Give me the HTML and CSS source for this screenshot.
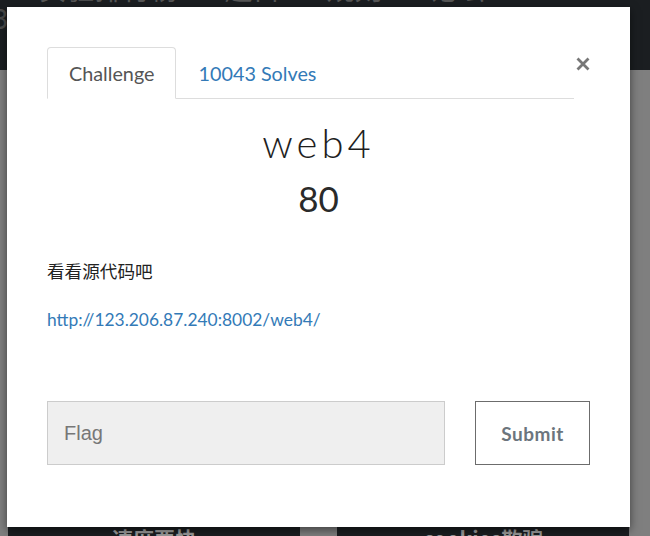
FILE: index.html
```html
<!DOCTYPE html>
<html lang="zh">
<head>
<meta charset="utf-8">
<title>web4</title>
<link rel="stylesheet" href="styles.css">
</head>
<body>
<header class="topnav">
  <span class="brand">3</span>
  <nav class="topnav-links">
    <span>实验排行榜</span><span>题目</span><span>规则</span><span>论坛</span>
  </nav>
</header>
<main class="grid">
  <div class="card"></div>
  <div class="card"></div>
  <div class="card"></div>
  <div class="card"></div>
  <div class="card"></div>
  <div class="card"></div>
  <div class="card"><span class="card-title">速度要快</span></div>
  <div class="card"><span class="card-title">cookies欺骗</span></div>
</main>

<div class="modal">
  <div class="modal-header">
    <ul class="tabs">
      <li class="tab active">Challenge</li>
      <li class="tab link">10043 Solves</li>
    </ul>
    <button class="close" aria-label="Close">
      <svg width="14" height="14" viewBox="0 0 14 14"><path d="M1.5 1.5 L12.5 12.5 M12.5 1.5 L1.5 12.5" stroke="#777" stroke-width="2.8" stroke-linecap="butt"/></svg>
    </button>
  </div>
  <h2 class="chal-name">web4</h2>
  <h3 class="chal-value">80</h3>
  <p class="desc">看看源代码吧</p>
  <p class="desc link-line"><a href="#">http://123.206.87.240:8002/web4/</a></p>
  <form class="flag-row">
    <input class="flag-input" type="text" placeholder="Flag">
    <button class="submit" type="button">Submit</button>
  </form>
</div>
</body>
</html>
```
FILE: styles.css
```css
html, body {
  margin: 0;
  padding: 0;
  overflow: hidden;
}
body {
  width: 650px;
  height: 536px;
  background: #7f7f7f;
  font-family: "Lato", "Noto Sans CJK SC", sans-serif;
  position: relative;
}
.topnav {
  height: 70px;
  background: #1b1e21;
  display: flex;
  overflow: hidden;
}
.brand {
  font-family: "DejaVu Sans", sans-serif;
  font-size: 26px;
  color: #4a4a4a;
  margin: 6px 0 0 -8px;
  line-height: 28px;
}
.topnav-links {
  display: flex;
  gap: 46px;
  margin: -26px 0 0 30px;
  font-size: 28px;
  line-height: 28px;
  color: #565656;
  font-family: "Noto Sans CJK SC", sans-serif;
}
.grid {
  display: grid;
  grid-template-columns: 292px 292px;
  column-gap: 37px;
  row-gap: 20px;
  padding: 20px 0 0 8px;
  height: 446px;
  overflow: hidden;
}
.card {
  height: 120px;
  background: #1b1e21;
  text-align: center;
  padding-top: 13px;
  box-sizing: border-box;
}
.card-title {
  font-family: "Noto Sans CJK SC", sans-serif;
  font-weight: 700;
  font-size: 21px;
  line-height: 30px;
  color: #9c9c9c;
}
.modal {
  position: absolute;
  left: 7px;
  top: 7px;
  width: 623px;
  height: 520px;
  box-sizing: border-box;
  background: #fff;
  padding: 40px 40px;
  box-shadow: 0 3px 9px rgba(0,0,0,0.5);
  color: #333;
}
.modal-header {
  display: flex;
  align-items: flex-start;
}
.tabs {
  flex: 1;
  display: flex;
  list-style: none;
  margin: 0;
  padding: 0;
  border-bottom: 1px solid #ddd;
}
.tab {
  font-size: 19.8px;
  line-height: 28px;
  padding: 11px 21px;
  margin-bottom: -1px;
  border: 1px solid transparent;
  border-radius: 4px 4px 0 0;
}
.tab.active {
  color: #555;
  border-color: #ddd #ddd transparent;
  background: #fff;
}
.tab.link {
  color: #337ab7;
}
.close {
  border: 0;
  background: none;
  padding: 0;
  margin: 10px 0 0 0;
  width: 16px;
  height: 14px;
  display: flex;
  justify-content: flex-end;
}
.chal-name {
  text-align: center;
  font-weight: 300;
  font-size: 40px;
  line-height: 48px;
  letter-spacing: 4px;
  margin: 20px 0 0;
  color: #1e1e1e;
}
.chal-value {
  text-align: center;
  font-weight: 400;
  font-size: 35px;
  line-height: 43px;
  margin: 10px 0 0;
  color: #2a2a2a;
}
.desc {
  font-size: 17.6px;
  line-height: 24px;
  margin: 40px 0 0;
  color: #222;
}
.link-line {
  margin-top: 24px;
  font-size: 17.4px;
}
.link-line a {
  color: #337ab7;
  text-decoration: none;
}
.flag-row {
  display: flex;
  gap: 30px;
  margin-top: 69px;
}
.flag-input {
  width: 398px;
  height: 64px;
  box-sizing: border-box;
  background: #efefef;
  border: 1px solid #ccc;
  padding: 0 16px;
  font-family: "Liberation Sans", sans-serif;
  font-size: 20px;
  color: #333;
  outline: none;
}
.flag-input::placeholder {
  color: #777;
}
.submit {
  width: 115px;
  height: 64px;
  background: #fff;
  border: 1px solid #6c6c6c;
  font-family: "Lato", sans-serif;
  font-weight: 700;
  font-size: 19px;
  color: #6c757d;
  letter-spacing: 0.5px;
}
```
